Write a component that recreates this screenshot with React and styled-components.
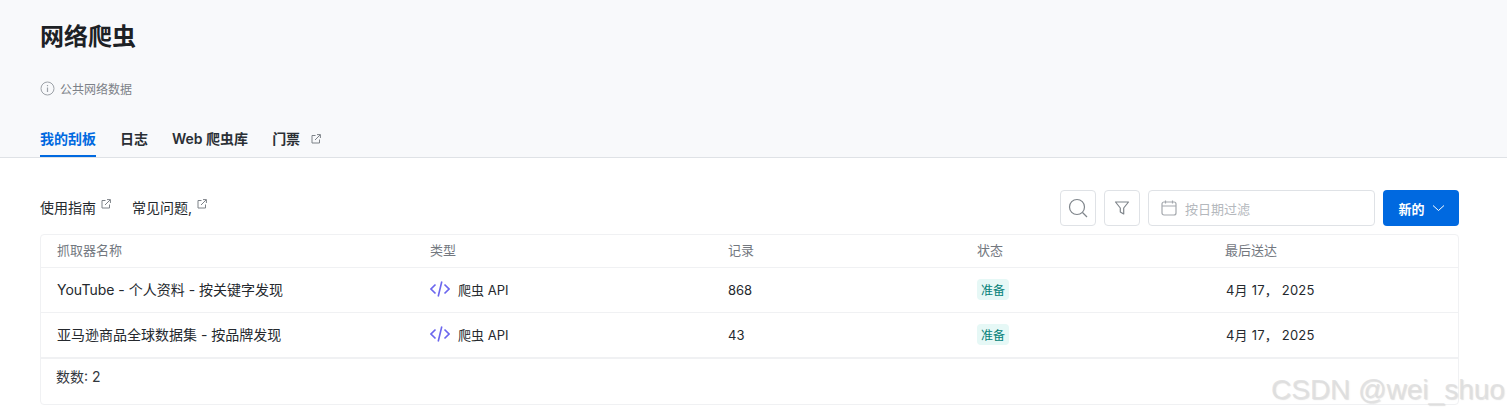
import React from "react";
import styled, { createGlobalStyle } from "styled-components";

const Global = createGlobalStyle`
  html, body { margin: 0; padding: 0; background: #fff; }
  body { font-family: Inter, "Noto Sans CJK SC", sans-serif; color: #1f2429; overflow: hidden; }
  * { box-sizing: border-box; }
`;

const Page = styled.div`
  position: relative;
  width: 1507px;
  height: 415px;
  overflow: hidden;
`;
const Header = styled.header`
  height: 158px;
  padding: 0 40px;
  background: #f8f9fb;
  border-bottom: 1px solid #dfe2e6;
  display: flex;
  flex-direction: column;
`;
const Title = styled.h1`
  margin: 21px 0 0;
  font-size: 24px;
  line-height: 32px;
  font-weight: 700;
  color: #1d2125;
`;
const Info = styled.div`
  margin-top: 24px;
  display: flex;
  align-items: center;
  gap: 5px;
  height: 22px;
  font-size: 12px;
  color: #7c8188;
`;
const Tabs = styled.nav`
  margin-top: auto;
  display: flex;
  gap: 24px;
  height: 36px;
`;
const Tab = styled.a`
  display: flex;
  align-items: center;
  gap: 11px;
  height: 36px;
  font-size: 14px;
  font-weight: 600;
  color: ${(p) => (p.$active ? "#0069e0" : "#2a2f35")};
  border-bottom: 2px solid ${(p) => (p.$active ? "#0069e0" : "transparent")};
  svg { margin-top: 1px; }
`;
const Main = styled.main`
  padding: 32px 48px 0 40px;
`;
const Toolbar = styled.div`
  display: flex;
  align-items: center;
  justify-content: space-between;
  height: 36px;
`;
const Links = styled.div`
  display: flex;
  gap: 21px;
`;
const GuideLink = styled.a`
  display: flex;
  align-items: flex-start;
  gap: 5px;
  font-size: 14px;
  line-height: 20px;
  color: #25292e;
  svg { margin-top: 1px; }
`;
const Controls = styled.div`
  display: flex;
  gap: 8px;
`;
const IconButton = styled.button`
  width: 36px;
  height: 36px;
  padding: 0;
  display: flex;
  align-items: center;
  justify-content: center;
  background: #fff;
  border: 1px solid #dfe2e6;
  border-radius: 4px;
`;
const DateFilter = styled.div`
  width: 227px;
  height: 36px;
  padding-left: 12px;
  display: flex;
  align-items: center;
  gap: 8px;
  border: 1px solid #dfe2e6;
  border-radius: 4px;
  font-size: 13px;
  color: #b4b8bd;
`;
const NewButton = styled.button`
  width: 76px;
  height: 36px;
  padding: 0 0 0 1px;
  display: flex;
  align-items: center;
  justify-content: center;
  gap: 7px;
  border: none;
  border-radius: 4px;
  background: #0069e0;
  color: #fff;
  font-family: inherit;
  font-size: 13px;
  font-weight: 700;
`;
const TableCard = styled.section`
  margin-top: 8px;
  height: 171px;
  border: 1px solid #f0f1f3;
  border-radius: 4px;
`;
const Row = styled.div`
  display: grid;
  grid-template-columns: 373px 298px 249px 248px 1fr;
  align-items: center;
  height: ${(p) => p.$h}px;
  border-bottom: ${(p) => p.$b || 1}px solid #f0f1f3;
  font-size: 13px;
  color: #25292e;
`;
const HeadCell = styled.div`
  padding: 0 0 3px 16px;
  color: #73787f;
`;
const Cell = styled.div`
  padding: 0 0 2px 16px;
  display: flex;
  align-items: center;
`;
const NameCell = styled(Cell)`
  font-size: 14px;
`;
const TypeLabel = styled.span`
  margin-left: 8px;
  font-size: 13px;
`;
const CountCell = styled(Cell)`
  padding-bottom: 0;
`;
const Badge = styled.span`
  height: 21px;
  padding: 0 4px;
  display: inline-flex;
  align-items: center;
  background: #e6f8f6;
  border-radius: 4px;
  font-size: 12px;
  color: #047f78;
`;
const DateCell = styled(Cell)`
  padding-left: 17px;
  letter-spacing: 0.2px;
`;
const Footer = styled.div`
  padding: 8px 15px;
  font-size: 14px;
  line-height: 20px;
  color: #33383e;
`;
const Watermark = styled.div`
  position: absolute;
  left: 1271px;
  top: 373px;
  font-family: "Liberation Sans", sans-serif;
  font-size: 28px;
  line-height: 34px;
  white-space: nowrap;
  color: rgba(222, 222, 222, 0.85);
  text-shadow: 1px 1px 1px rgba(170, 170, 170, 0.35);
`;

const External = ({ size = 10, color = "#7d8288" }) => (
  <svg width={size} height={size} viewBox="0 0 10 10" fill="none" stroke={color} strokeWidth="1">
    <path d="M4.500 1.500H1v7.500h7.500V5.500" />
    <path d="M4 6 9.200.8M6 .6h3.400V4" />
  </svg>
);
const InfoIcon = () => (
  <svg width="15" height="15" viewBox="0 0 15 15" fill="none" stroke="#9da2a8" strokeWidth="1">
    <circle cx="7.500" cy="7.500" r="6.500" />
    <path d="M7.500 6.500v4.500" strokeWidth="1.200" />
    <path d="M7.500 4v1.200" strokeWidth="1.200" />
  </svg>
);
const CodeIcon = () => (
  <svg width="20" height="18" viewBox="0 0 20 18" fill="none" stroke="#6b66ee" strokeWidth="1.600">
    <path d="M5.500 4.500 1 9l4.500 4.500M14.500 4.500 19 9l-4.500 4.500M11.800 1.500 8.200 16.500" />
  </svg>
);

const rows = [
  { name: "YouTube - 个人资料 - 按关键字发现", count: "868" },
  { name: "亚马逊商品全球数据集 - 按品牌发现", count: "43" },
];

export default function App() {
  return (
    <Page>
      <Global />
      <Header>
        <Title>网络爬虫</Title>
        <Info><InfoIcon />公共网络数据</Info>
        <Tabs>
          <Tab $active>我的刮板</Tab>
          <Tab>日志</Tab>
          <Tab>Web 爬虫库</Tab>
          <Tab>门票<External /></Tab>
        </Tabs>
      </Header>
      <Main>
        <Toolbar>
          <Links>
            <GuideLink>使用指南<External /></GuideLink>
            <GuideLink>常见问题,<External /></GuideLink>
          </Links>
          <Controls>
            <IconButton>
              <svg width="20" height="20" viewBox="0 0 20 20" fill="none" stroke="#7f858b" strokeWidth="1.200">
                <circle cx="9" cy="9" r="7.500" />
                <path d="m14.500 14.500 4.500 4.500" />
              </svg>
            </IconButton>
            <IconButton>
              <svg width="16" height="16" viewBox="0 0 16 16" fill="none" stroke="#7f858b" strokeWidth="1.200" strokeLinejoin="round">
                <path d="M1.500 2h13L9.700 8v6l-3.400-2V8z" />
              </svg>
            </IconButton>
            <DateFilter>
              <svg width="16" height="16" viewBox="0 0 16 16" fill="none" stroke="#a4a8ad" strokeWidth="1.200">
                <rect x="1" y="2" width="14" height="13" rx="2" />
                <path d="M1 6h14M4.500 .5v3M11.500 .5v3" />
              </svg>
              按日期过滤
            </DateFilter>
            <NewButton>
              新的
              <svg width="13" height="8" viewBox="0 0 13 8" fill="none" stroke="#fff" strokeWidth="1">
                <path d="m1 1.500 5.500 5 5.500-5" />
              </svg>
            </NewButton>
          </Controls>
        </Toolbar>
        <TableCard>
          <Row $h={33}>
            <HeadCell>抓取器名称</HeadCell>
            <HeadCell>类型</HeadCell>
            <HeadCell>记录</HeadCell>
            <HeadCell>状态</HeadCell>
            <HeadCell>最后送达</HeadCell>
          </Row>
          {rows.map((r, i) => (
            <Row key={r.name} $h={i === 0 ? 45 : 46} $b={i === 0 ? 1 : 2}>
              <NameCell>{r.name}</NameCell>
              <Cell><CodeIcon /><TypeLabel>爬虫 API</TypeLabel></Cell>
              <CountCell>{r.count}</CountCell>
              <Cell><Badge>准备</Badge></Cell>
              <DateCell>4月 17， 2025</DateCell>
            </Row>
          ))}
          <Footer>数数: 2</Footer>
        </TableCard>
      </Main>
      <Watermark>CSDN @wei_shuo</Watermark>
    </Page>
  );
}
